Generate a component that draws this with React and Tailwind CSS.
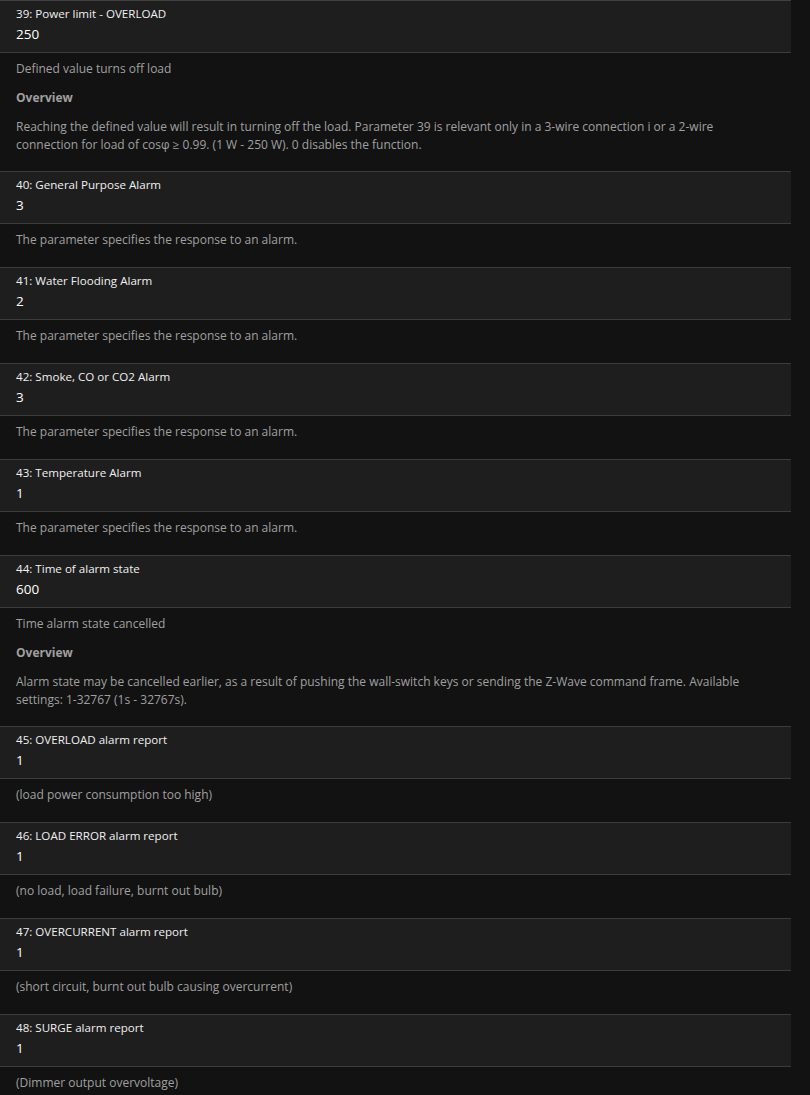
import React from "react";

const items = [
  {
    title: "39: Power limit - OVERLOAD",
    value: "250",
    desc: "Defined value turns off load",
    overview:
      "Reaching the defined value will result in turning off the load. Parameter 39 is relevant only in a 3-wire connection i or a 2-wire connection for load of cosφ ≥ 0.99. (1 W - 250 W). 0 disables the function.",
  },
  { title: "40: General Purpose Alarm", value: "3", desc: "The parameter specifies the response to an alarm." },
  { title: "41: Water Flooding Alarm", value: "2", desc: "The parameter specifies the response to an alarm." },
  { title: "42: Smoke, CO or CO2 Alarm", value: "3", desc: "The parameter specifies the response to an alarm." },
  { title: "43: Temperature Alarm", value: "1", desc: "The parameter specifies the response to an alarm." },
  {
    title: "44: Time of alarm state",
    value: "600",
    desc: "Time alarm state cancelled",
    overview:
      "Alarm state may be cancelled earlier, as a result of pushing the wall-switch keys or sending the Z-Wave command frame. Available settings: 1-32767 (1s - 32767s).",
  },
  { title: "45: OVERLOAD alarm report", value: "1", desc: "(load power consumption too high)" },
  { title: "46: LOAD ERROR alarm report", value: "1", desc: "(no load, load failure, burnt out bulb)" },
  { title: "47: OVERCURRENT alarm report", value: "1", desc: "(short circuit, burnt out bulb causing overcurrent)" },
  { title: "48: SURGE alarm report", value: "1", desc: "(Dimmer output overvoltage)" },
];

function Item({ item, first }) {
  return (
    <div className={first ? "border-t border-[#404040]" : "border-t border-[#3c3c3c]"}>
      <div className="bg-[#1e1e1e] px-4 pt-[5px] pb-[8px] border-b border-[#3c3c3c]">
        <div className="text-[11.6px] leading-[16px] text-[#f0f0f0]">{item.title}</div>
        <div className="mt-[2px] text-[13.5px] leading-[20px] text-white">{item.value}</div>
      </div>
      <div
        className={
          item.overview
            ? "bg-[#121212] px-4 pt-[7px] pb-[17px] text-[12px] leading-[18px] text-[#a0a0a0]"
            : "bg-[#121212] px-4 pt-[7px] pb-[18px] text-[12px] leading-[18px] text-[#a0a0a0]"
        }
      >
        <p>{item.desc}</p>
        {item.overview && (
          <>
            <p className="mt-[11px] font-bold">Overview</p>
            <p className="mt-[11px]">{item.overview}</p>
          </>
        )}
      </div>
    </div>
  );
}

export default function App() {
  return (
    <div
      className="w-[810px] h-[1095px] overflow-hidden bg-[#121212]"
      style={{ fontFamily: '"Open Sans", "Noto Sans", sans-serif' }}
    >
      <div className="w-[791px]">
        {items.map((it, i) => (
          <Item key={i} item={it} first={i === 0} />
        ))}
      </div>
    </div>
  );
}
